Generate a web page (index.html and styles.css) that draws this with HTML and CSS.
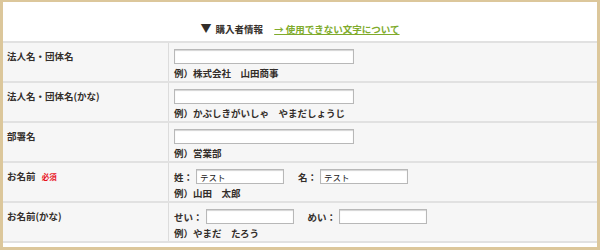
FILE: index.html
```html
<!DOCTYPE html>
<html lang="ja">
<head>
    <meta charset="UTF-8">
    <title>購入者情報</title>
    <link rel="stylesheet" href="styles.css">
</head>
<body>
    <div class="frame">
        <div class="heading">
            <span class="heading-title"><span class="arrow">▼</span>購入者情報</span>
            <a href="#" class="heading-link">→ 使用できない文字について</a>
        </div>

        <table class="form-table">
            <tr>
                <th>法人名・団体名</th>
                <td>
                    <input type="text" class="field">
                    <p class="example">例）株式会社　山田商事</p>
                </td>
            </tr>
            <tr>
                <th>法人名・団体名(かな)</th>
                <td>
                    <input type="text" class="field">
                    <p class="example">例）かぶしきがいしゃ　やまだしょうじ</p>
                </td>
            </tr>
            <tr>
                <th>部署名</th>
                <td>
                    <input type="text" class="field">
                    <p class="example">例）営業部</p>
                </td>
            </tr>
            <tr>
                <th>お名前 <span class="required">必須</span></th>
                <td>
                    <div class="name-row">
                        <label><span class="name-label">姓：</span><input type="text" class="field small" value="テスト"></label>
                        <label><span class="name-label">名：</span><input type="text" class="field small" value="テスト"></label>
                    </div>
                    <p class="example">例）山田　太郎</p>
                </td>
            </tr>
            <tr>
                <th>お名前(かな)</th>
                <td>
                    <div class="name-row">
                        <label><span class="name-label">せい：</span><input type="text" class="field small"></label>
                        <label><span class="name-label">めい：</span><input type="text" class="field small"></label>
                    </div>
                    <p class="example">例）やまだ　たろう</p>
                </td>
            </tr>
        </table>
    </div>
</body>
</html>
```

FILE: styles.css
```css
body {
    margin: 0;
    padding: 0;
    font-family: "Noto Sans CJK JP", "Noto Sans", sans-serif;
    font-size: 9.5px;
    font-weight: bold;
    color: #332e2a;
    background: #ffffff;
}

.frame {
    height: 245px;
    overflow: hidden;
    border: 3px solid #dcc79b;
    border-top-width: 2px;
    background: #ffffff;
}

.heading {
    height: 39px;
    box-sizing: border-box;
    padding-top: 19px;
    line-height: 14px;
    text-align: center;
}

.heading-title {
    margin-right: 9px;
}

.arrow {
    margin-right: 4px;
    font-size: 11px;
}

.heading-link {
    color: #80ab2c;
    text-decoration: underline;
}

.form-table {
    width: 100%;
    border-collapse: collapse;
    border-top: 2px solid #e1e1e1;
}

.form-table tr {
    border-bottom: 2px solid #e1e1e1;
    background: #f6f6f6;
}

.form-table th {
    width: 157px;
    padding: 7px 4px 0;
    border-right: 1px solid #dcdcdc;
    text-align: left;
    vertical-align: top;
    line-height: 12px;
    font-weight: bold;
}

.form-table td {
    padding: 6px 5px 2px;
    vertical-align: top;
    line-height: 12px;
}

.required {
    margin-left: 4px;
    font-size: 7.5px;
    color: #e8101c;
}

.field {
    display: block;
    width: 180px;
    height: 15px;
    box-sizing: border-box;
    margin: 0;
    padding: 0 3px;
    border: 1px solid #b8b8b8;
    box-shadow: inset 0 1px 1px #d4d4d4;
    background: #ffffff;
    font-family: inherit;
    font-size: 8.5px;
    font-weight: normal;
    color: #222;
}

.field.small {
    display: inline-block;
    width: 88px;
}

.name-row {
    display: flex;
    gap: 14px;
}

.name-row label {
    display: flex;
    align-items: center;
}

.name-label {
    margin-right: 3px;
}

.example {
    margin: 3px 0 0;
}
```
